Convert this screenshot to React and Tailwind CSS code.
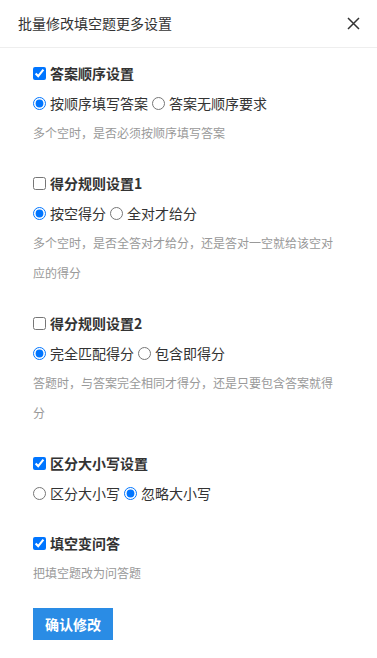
import React, { useState } from 'react';

const FONT = { fontFamily: '"Noto Sans CJK SC", "Noto Sans", sans-serif' };

const Radio = ({ name, checked, onChange, label }) => (
  <label className="flex items-center gap-[4px] cursor-pointer">
    <input
      type="radio"
      name={name}
      checked={checked}
      onChange={onChange}
      className="w-[13px] h-[13px] m-0 accent-[#0075ff]"
    />
    <span>{label}</span>
  </label>
);

const Section = ({ title, checked, onToggle, options, value, onPick, desc, name }) => (
  <div className="mb-5">
    <label className="flex items-center h-[30px] gap-[4px] cursor-pointer">
      <input
        type="checkbox"
        checked={checked}
        onChange={onToggle}
        className="w-[13px] h-[13px] m-0 accent-[#0075ff]"
      />
      <span className="text-[14px] font-bold text-[#333]">{title}</span>
    </label>
    {options && (
      <div className="flex items-center h-[30px] gap-[4px] text-[14px] text-[#333]">
        {options.map((opt, i) => (
          <Radio key={opt} name={name} label={opt} checked={value === i} onChange={() => onPick(i)} />
        ))}
      </div>
    )}
    {desc && <p className="text-[12px] leading-[30px] text-[#999]">{desc}</p>}
  </div>
);

export default function App() {
  const [checks, setChecks] = useState({ order: true, rule1: false, rule2: false, caseSet: true, toQa: true });
  const [picks, setPicks] = useState({ order: 0, rule1: 0, rule2: 0, caseSet: 1 });

  const toggle = (k) => setChecks((c) => ({ ...c, [k]: !c[k] }));
  const pick = (k) => (i) => setPicks((p) => ({ ...p, [k]: i }));

  return (
    <div className="w-[377px] h-[658px] bg-white overflow-hidden" style={FONT}>
      {/* Header */}
      <div className="flex items-center justify-between h-12 pl-[18px] pr-[16px] border-b border-[#eee]">
        <h2 className="text-[14px] text-[#333]">批量修改填空题更多设置</h2>
        <button className="w-4 h-4 flex items-center justify-center text-[#333]">
          <svg width="13" height="13" viewBox="0 0 13 13" fill="none" stroke="currentColor" strokeWidth="1.5">
            <path d="M1 1L12 12M12 1L1 12" />
          </svg>
        </button>
      </div>

      {/* Body */}
      <div className="px-[33px] pt-[10px]">
        <Section
          name="order"
          title="答案顺序设置"
          checked={checks.order}
          onToggle={() => toggle('order')}
          options={['按顺序填写答案', '答案无顺序要求']}
          value={picks.order}
          onPick={pick('order')}
          desc="多个空时，是否必须按顺序填写答案"
        />
        <Section
          name="rule1"
          title="得分规则设置1"
          checked={checks.rule1}
          onToggle={() => toggle('rule1')}
          options={['按空得分', '全对才给分']}
          value={picks.rule1}
          onPick={pick('rule1')}
          desc="多个空时，是否全答对才给分，还是答对一空就给该空对应的得分"
        />
        <Section
          name="rule2"
          title="得分规则设置2"
          checked={checks.rule2}
          onToggle={() => toggle('rule2')}
          options={['完全匹配得分', '包含即得分']}
          value={picks.rule2}
          onPick={pick('rule2')}
          desc="答题时，与答案完全相同才得分，还是只要包含答案就得分"
        />
        <Section
          name="caseSet"
          title="区分大小写设置"
          checked={checks.caseSet}
          onToggle={() => toggle('caseSet')}
          options={['区分大小写', '忽略大小写']}
          value={picks.caseSet}
          onPick={pick('caseSet')}
        />
        <Section
          name="toQa"
          title="填空变问答"
          checked={checks.toQa}
          onToggle={() => toggle('toQa')}
          desc="把填空题改为问答题"
        />
        <button className="w-20 h-8 bg-[#2a8ce5] text-white text-[14px] font-bold">确认修改</button>
      </div>
    </div>
  );
}
